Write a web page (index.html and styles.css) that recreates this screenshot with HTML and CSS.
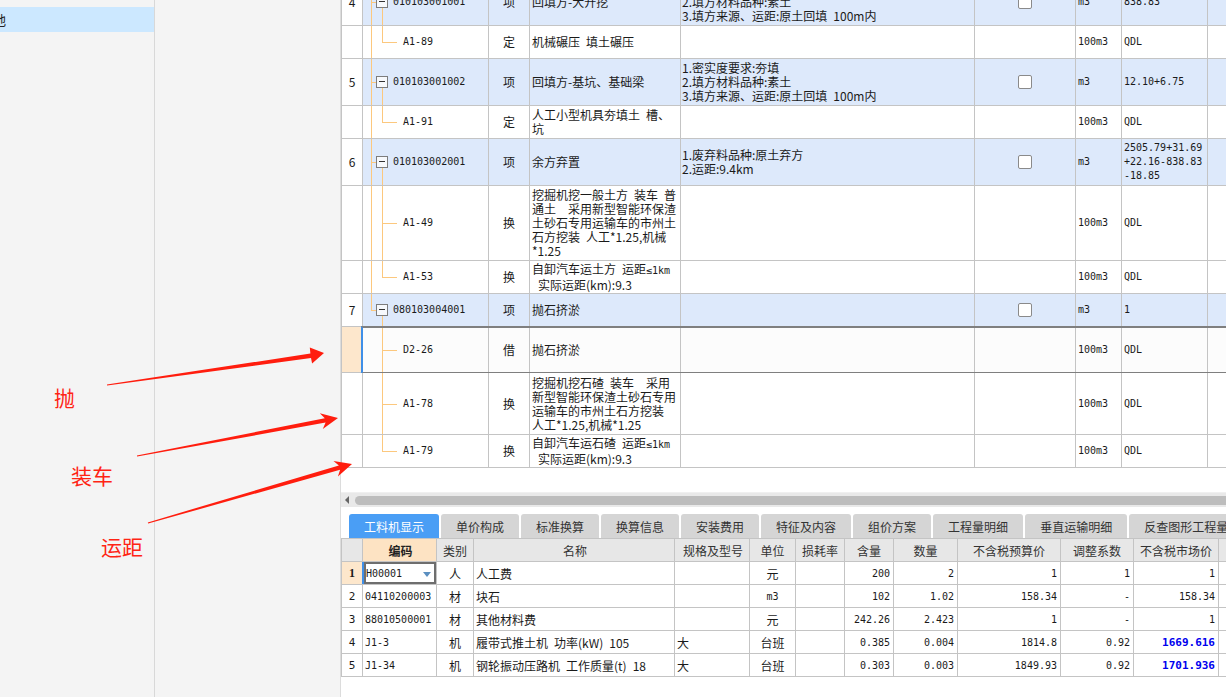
FILE: index.html
```html
<!DOCTYPE html>
<html lang="zh-CN">
<head>
<meta charset="utf-8">
<title>分部分项</title>
<link rel="stylesheet" href="styles.css">
</head>
<body>
<div class="app">
  <aside class="nav">
    <div class="nav-item"><span>地</span></div>
  </aside>
  <aside class="nav2"></aside>
  <main class="main">
    <div class="grid-wrap">
      <div class="grid">
        <div class="row item h47">
          <div class="c num">4</div>
          <div class="c tree"><span class="v1 full"></span><span class="h1"></span><span class="box"></span><span class="v2 bottom"></span><span class="code m">010103001001</span></div>
          <div class="c typ">项</div>
          <div class="c name">回填方-大开挖</div>
          <div class="c feat">1.密实度要求:夯填<br>2.填方材料品种:素土<br>3.填方来源、运距:原土回填&ensp;100m内</div>
          <div class="c chk"><span class="cb"></span></div>
          <div class="c unit m">m3</div>
          <div class="c qty m">838.83</div>
          <div class="c last"></div>
        </div>
        <div class="row h33">
          <div class="c num"></div>
          <div class="c tree"><span class="v1 full"></span><span class="v2 top"></span><span class="h2"></span><span class="code child m">A1-89</span></div>
          <div class="c typ">定</div>
          <div class="c name">机械碾压&ensp;填土碾压</div>
          <div class="c feat"></div>
          <div class="c chk"></div>
          <div class="c unit m">100m3</div>
          <div class="c qty m">QDL</div>
          <div class="c last"></div>
        </div>
        <div class="row item h47">
          <div class="c num">5</div>
          <div class="c tree"><span class="v1 full"></span><span class="h1"></span><span class="box"></span><span class="v2 bottom"></span><span class="code m">010103001002</span></div>
          <div class="c typ">项</div>
          <div class="c name">回填方-基坑、基础梁</div>
          <div class="c feat">1.密实度要求:夯填<br>2.填方材料品种:素土<br>3.填方来源、运距:原土回填&ensp;100m内</div>
          <div class="c chk"><span class="cb"></span></div>
          <div class="c unit m">m3</div>
          <div class="c qty m">12.10+6.75</div>
          <div class="c last"></div>
        </div>
        <div class="row h33">
          <div class="c num"></div>
          <div class="c tree"><span class="v1 full"></span><span class="v2 top"></span><span class="h2"></span><span class="code child m">A1-91</span></div>
          <div class="c typ">定</div>
          <div class="c name">人工小型机具夯填土&ensp;槽、<br>坑</div>
          <div class="c feat"></div>
          <div class="c chk"></div>
          <div class="c unit m">100m3</div>
          <div class="c qty m">QDL</div>
          <div class="c last"></div>
        </div>
        <div class="row item h47">
          <div class="c num">6</div>
          <div class="c tree"><span class="v1 full"></span><span class="h1"></span><span class="box"></span><span class="v2 bottom"></span><span class="code m">010103002001</span></div>
          <div class="c typ">项</div>
          <div class="c name">余方弃置</div>
          <div class="c feat">1.废弃料品种:原土弃方<br>2.运距:9.4km</div>
          <div class="c chk"><span class="cb"></span></div>
          <div class="c unit m">m3</div>
          <div class="c qty m">2505.79+31.69<br>+22.16-838.83<br>-18.85</div>
          <div class="c last"></div>
        </div>
        <div class="row h75">
          <div class="c num"></div>
          <div class="c tree"><span class="v1 full"></span><span class="v2 full"></span><span class="h2"></span><span class="code child m">A1-49</span></div>
          <div class="c typ">换</div>
          <div class="c name">挖掘机挖一般土方&ensp;装车&ensp;普<br>通土&ensp;&ensp;采用新型智能环保渣<br>土砂石专用运输车的市州土<br>石方挖装&ensp;人工*1.25,机械<br>*1.25</div>
          <div class="c feat"></div>
          <div class="c chk"></div>
          <div class="c unit m">100m3</div>
          <div class="c qty m">QDL</div>
          <div class="c last"></div>
        </div>
        <div class="row h33">
          <div class="c num"></div>
          <div class="c tree"><span class="v1 full"></span><span class="v2 top"></span><span class="h2"></span><span class="code child m">A1-53</span></div>
          <div class="c typ">换</div>
          <div class="c name"><div class="txt">自卸汽车运土方&ensp;运距<span class="mi">≤1km</span><br>&ensp;实际运距(km):9.3</div></div>
          <div class="c feat"></div>
          <div class="c chk"></div>
          <div class="c unit m">100m3</div>
          <div class="c qty m">QDL</div>
          <div class="c last"></div>
        </div>
        <div class="row item h33">
          <div class="c num">7</div>
          <div class="c tree"><span class="v1 top"></span><span class="h1"></span><span class="box"></span><span class="v2 bottom"></span><span class="code m">080103004001</span></div>
          <div class="c typ">项</div>
          <div class="c name">抛石挤淤</div>
          <div class="c feat"></div>
          <div class="c chk"><span class="cb"></span></div>
          <div class="c unit m">m3</div>
          <div class="c qty m">1</div>
          <div class="c last"></div>
        </div>
        <div class="row sel h46">
          <div class="c num"></div>
          <div class="c tree"><span class="v2 full"></span><span class="h2"></span><span class="code child m">D2-26</span></div>
          <div class="c typ">借</div>
          <div class="c name">抛石挤淤</div>
          <div class="c feat"></div>
          <div class="c chk"></div>
          <div class="c unit m">100m3</div>
          <div class="c qty m">QDL</div>
          <div class="c last"></div>
        </div>
        <div class="row h62">
          <div class="c num"></div>
          <div class="c tree"><span class="v2 full"></span><span class="h2"></span><span class="code child m">A1-78</span></div>
          <div class="c typ">换</div>
          <div class="c name">挖掘机挖石碴&ensp;装车&ensp;&ensp;采用<br>新型智能环保渣土砂石专用<br>运输车的市州土石方挖装<br>人工*1.25,机械*1.25</div>
          <div class="c feat"></div>
          <div class="c chk"></div>
          <div class="c unit m">100m3</div>
          <div class="c qty m">QDL</div>
          <div class="c last"></div>
        </div>
        <div class="row h33">
          <div class="c num"></div>
          <div class="c tree"><span class="v2 top"></span><span class="h2"></span><span class="code child m">A1-79</span></div>
          <div class="c typ">换</div>
          <div class="c name"><div class="txt">自卸汽车运石碴&ensp;运距<span class="mi">≤1km</span><br>&ensp;实际运距(km):9.3</div></div>
          <div class="c feat"></div>
          <div class="c chk"></div>
          <div class="c unit m">100m3</div>
          <div class="c qty m">QDL</div>
          <div class="c last"></div>
        </div>
      </div>
    </div>

    <div class="hscroll">
      <span class="arrow-l"></span>
      <div class="thumb"></div>
    </div>

    <div class="tabs">
      <div class="tab active">工料机显示</div>
      <div class="tab">单价构成</div>
      <div class="tab">标准换算</div>
      <div class="tab">换算信息</div>
      <div class="tab">安装费用</div>
      <div class="tab">特征及内容</div>
      <div class="tab">组价方案</div>
      <div class="tab">工程量明细</div>
      <div class="tab">垂直运输明细</div>
      <div class="tab">反查图形工程量</div>
    </div>

    <div class="sub">
      <div class="lrow head">
        <div class="lc lnum"></div>
        <div class="lc lcode hl">编码</div>
        <div class="lc lcat">类别</div>
        <div class="lc lname">名称</div>
        <div class="lc lspec">规格及型号</div>
        <div class="lc lunit">单位</div>
        <div class="lc lloss">损耗率</div>
        <div class="lc lcont">含量</div>
        <div class="lc lqty">数量</div>
        <div class="lc lbud">不含税预算价</div>
        <div class="lc ladj">调整系数</div>
        <div class="lc lmkt">不含税市场价</div>
        <div class="lc lrest"></div>
      </div>
      <div class="lrow">
        <div class="lc lnum cur">1</div>
        <div class="lc lcode edit"><span class="m">H00001</span><span class="dd"></span></div>
        <div class="lc lcat">人</div>
        <div class="lc lname">人工费</div>
        <div class="lc lspec"></div>
        <div class="lc lunit">元</div>
        <div class="lc lloss"></div>
        <div class="lc lcont m">200</div>
        <div class="lc lqty m">2</div>
        <div class="lc lbud m">1</div>
        <div class="lc ladj m">1</div>
        <div class="lc lmkt m">1</div>
        <div class="lc lrest"></div>
      </div>
      <div class="lrow">
        <div class="lc lnum">2</div>
        <div class="lc lcode m">04110200003</div>
        <div class="lc lcat">材</div>
        <div class="lc lname">块石</div>
        <div class="lc lspec"></div>
        <div class="lc lunit m">m3</div>
        <div class="lc lloss"></div>
        <div class="lc lcont m">102</div>
        <div class="lc lqty m">1.02</div>
        <div class="lc lbud m">158.34</div>
        <div class="lc ladj m">-</div>
        <div class="lc lmkt m">158.34</div>
        <div class="lc lrest"></div>
      </div>
      <div class="lrow">
        <div class="lc lnum">3</div>
        <div class="lc lcode m">88010500001</div>
        <div class="lc lcat">材</div>
        <div class="lc lname">其他材料费</div>
        <div class="lc lspec"></div>
        <div class="lc lunit">元</div>
        <div class="lc lloss"></div>
        <div class="lc lcont m">242.26</div>
        <div class="lc lqty m">2.423</div>
        <div class="lc lbud m">1</div>
        <div class="lc ladj m">-</div>
        <div class="lc lmkt m">1</div>
        <div class="lc lrest"></div>
      </div>
      <div class="lrow">
        <div class="lc lnum">4</div>
        <div class="lc lcode m">J1-3</div>
        <div class="lc lcat">机</div>
        <div class="lc lname">履带式推土机&ensp;功率(kW)&ensp;105</div>
        <div class="lc lspec">大</div>
        <div class="lc lunit">台班</div>
        <div class="lc lloss"></div>
        <div class="lc lcont m">0.385</div>
        <div class="lc lqty m">0.004</div>
        <div class="lc lbud m">1814.8</div>
        <div class="lc ladj m">0.92</div>
        <div class="lc lmkt m blue">1669.616</div>
        <div class="lc lrest"></div>
      </div>
      <div class="lrow">
        <div class="lc lnum">5</div>
        <div class="lc lcode m">J1-34</div>
        <div class="lc lcat">机</div>
        <div class="lc lname">钢轮振动压路机&ensp;工作质量(t)&ensp;18</div>
        <div class="lc lspec">大</div>
        <div class="lc lunit">台班</div>
        <div class="lc lloss"></div>
        <div class="lc lcont m">0.303</div>
        <div class="lc lqty m">0.003</div>
        <div class="lc lbud m">1849.93</div>
        <div class="lc ladj m">0.92</div>
        <div class="lc lmkt m blue">1701.936</div>
        <div class="lc lrest"></div>
      </div>
    </div>
  </main>
</div>

<div class="anno">
  <svg class="arrows" width="1226" height="697" viewBox="0 0 1226 697">
    <polygon points="106.9,384.4 310.4,353.6 309.8,347.6 324,353 312.1,363.4 311.0,358.0 107.1,385.6"/>
    <polygon points="136.9,455.4 324.8,418.3 319.8,413.3 338,418 322.8,429.0 325.6,422.6 137.1,456.6"/>
    <polygon points="147.8,522.4 338.9,465.5 333.5,461.0 352,464 337.9,476.4 340.1,469.7 148.2,523.6"/>
  </svg>
  <div class="label l1">抛</div>
  <div class="label l2">装车</div>
  <div class="label l3">运距</div>
</div>
</body>
</html>
```
FILE: styles.css
```css
* { box-sizing: border-box; }
html, body { margin: 0; padding: 0; }
body {
  width: 1226px;
  height: 697px;
  overflow: hidden;
  position: relative;
  background: #fff;
  color: #1a1a1a;
  font-family: "Noto Sans CJK SC", "Liberation Sans", sans-serif;
  font-size: 12px;
}
.app { display: flex; height: 697px; }

/* left panels */
.nav {
  width: 155px;
  flex: none;
  background: #f4f4f4;
  border-right: 1px solid #d8d8d8;
  padding-top: 7px;
  overflow: hidden;
}
.nav-item {
  height: 25px;
  background: #cce8ff;
  display: flex;
  align-items: center;
  font-size: 13px;
  color: #222;
}
.nav-item span { margin-left: -7px; }
.nav2 {
  width: 186px;
  flex: none;
  background: #f4f4f4;
  border-right: 1px solid #dcdcdc;
}

/* main */
.main {
  flex: 1;
  min-width: 0;
  display: flex;
  flex-direction: column;
  background: #fff;
  overflow: hidden;
}
.grid-wrap { height: 492px; flex: none; overflow: hidden; }
.grid { margin-top: -21px; }
.row {
  display: flex;
  position: relative;
  border-bottom: 1px solid #c4c4c4;
  background: #fff;
}
.row.item { background: #dde9fb; }
.row.sel { background: #fcfcfc; }
.h33 { height: 33px; }
.h46 { height: 46px; }
.h47 { height: 47px; }
.h62 { height: 62px; }
.h75 { height: 75px; }

.c {
  flex: none;
  display: flex;
  align-items: center;
  border-right: 1px solid #c4c4c4;
  line-height: 14px;
  white-space: nowrap;
  overflow: hidden;
}
.m, .mi {
  font-family: "DejaVu Sans Mono", "Liberation Mono", monospace;
  font-size: 10px;
}
.txt { line-height: 14px; }
.num { width: 22px; border-left: 1px solid #c4c4c4; justify-content: center; background: #fff; }
.tree { width: 126px; position: relative; }
.typ { width: 41px; justify-content: center; }
.name { width: 151px; padding-left: 2px; }
.feat { width: 294px; padding-left: 1px; }
.chk { width: 101px; justify-content: center; }
.unit { width: 46px; padding-left: 2px; }
.qty { width: 86px; padding-left: 2px; }
.last { flex: 1; border-right: none; }

.row.sel .num { background: #fde7cc; }
.row.sel::after {
  content: "";
  position: absolute;
  left: 20px;
  right: 0;
  top: -1px;
  bottom: -2px;
  border-top: 2px solid #7f7f7f;
  border-bottom: 2px solid #7f7f7f;
  border-left: 2px solid #3f8fe8;
  pointer-events: none;
}

.cb {
  width: 14px;
  height: 14px;
  border: 1px solid #8a8a8a;
  border-radius: 2px;
  background: #fff;
}

/* tree lines */
.tree span { position: absolute; }
.v1, .v2 { width: 1px; background: #fcc87e; }
.v1 { left: 8px; }
.v2 { left: 19px; }
.full { top: 0; bottom: 0; }
.v1.top, .v2.top { top: 0; height: 50%; }
.v2.bottom { top: calc(50% + 6px); bottom: 0; }
.h1, .h2 { height: 1px; background: #fcc87e; top: 50%; }
.h1 { left: 8px; width: 5px; }
.h2 { left: 19px; width: 15px; }
.box {
  left: 13px;
  top: calc(50% - 6px);
  width: 12px;
  height: 12px;
  border: 1px solid #7d7d7d;
  background: #f7f9fc;
}
.box::after {
  content: "";
  position: absolute;
  left: 2px;
  right: 2px;
  top: 4px;
  height: 1px;
  background: #333;
}
.tree .code { position: static; padding-left: 30px; }
.tree .code.child { padding-left: 40px; }

/* horizontal scrollbar */
.hscroll {
  height: 15px;
  flex: none;
  position: relative;
  background: #e9e9e9;
  border-top: 1px solid #f0f0f0;
  display: flex;
  align-items: center;
  padding-left: 4px;
}
.arrow-l {
  width: 0;
  height: 0;
  border-top: 4px solid transparent;
  border-bottom: 4px solid transparent;
  border-right: 4px solid #666;
}
.thumb {
  flex: 1;
  height: 9px;
  margin-left: 6px;
  background: #bdbdbd;
  border-radius: 5px 0 0 5px;
}

/* tabs */
.tabs {
  flex: none;
  display: flex;
  gap: 2px;
  padding: 7px 0 0 8px;
  height: 32px;
  background: #fff;
  overflow: hidden;
}
.tab {
  flex: none;
  height: 24px;
  padding: 0 15px;
  background: #d5d5d5;
  color: #333;
  border-radius: 3px 3px 0 0;
  display: flex;
  align-items: center;
  white-space: nowrap;
  font-size: 12px;
}
.tab.active { background: #4a9ef5; color: #fff; }

/* lower table */
.sub { flex: 1; background: #fff; }
.lrow {
  display: flex;
  height: 23px;
  border-bottom: 1px solid #c4c4c4;
}
.lrow.head { height: 24px; background: #e7e7e7; border-top: 1px solid #c4c4c4; margin-top: -1px; }
.lc {
  flex: none;
  display: flex;
  align-items: center;
  border-right: 1px solid #c4c4c4;
  white-space: nowrap;
  overflow: hidden;
  font-size: 12px;
  position: relative;
}
.lc.m { font-size: 10px; justify-content: flex-end; padding-right: 3px; }
.head .lc { justify-content: center; color: #333; font-size: 12px; }
.lnum { width: 22px; border-left: 1px solid #c4c4c4; justify-content: center; font-family: "DejaVu Sans Mono", monospace; font-size: 11px; }
.lcode { width: 74px; padding-left: 2px; }
.lc.lcode.m { justify-content: flex-start; padding-right: 0; }
.lcat { width: 37px; justify-content: center; }
.lname { width: 201px; padding-left: 2px; }
.lspec { width: 75px; padding-left: 2px; }
.lunit { width: 46px; justify-content: center; }
.lc.lunit.m { justify-content: center; padding-right: 0; }
.lloss { width: 49px; }
.lcont { width: 49px; }
.lqty { width: 64px; }
.lbud { width: 103px; }
.ladj { width: 73px; }
.lmkt { width: 85px; }
.lrest { flex: 1; border-right: none; }
.head .hl { background: #fde3c3; font-weight: bold; color: #222; }
.lnum.cur { background: #fde7cc; font-weight: bold; font-family: "Liberation Serif", serif; font-size: 12px; }
.lc.blue { color: #0000ee; font-weight: bold; font-size: 11px; }
.edit { box-shadow: inset 0 0 0 2px #6e6e6e; border-left: 2px solid #3f8fe8; margin-left: -1px; width: 75px; }
.edit .m { font-size: 10px; }
.dd {
  position: absolute;
  left: 59px;
  top: 10px;
  width: 0;
  height: 0;
  border-left: 4px solid transparent;
  border-right: 4px solid transparent;
  border-top: 5px solid #5b8fc0;
}

/* annotations */
.anno { position: absolute; left: 0; top: 0; width: 1226px; height: 697px; pointer-events: none; }
.arrows { position: absolute; left: 0; top: 0; }
.arrows polygon { fill: #ff1d0e; }
.label {
  position: absolute;
  color: #ff2414;
  font-size: 21px;
  line-height: 21px;
  font-family: "Noto Sans CJK SC", sans-serif;
}
.l1 { left: 54px; top: 387px; }
.l2 { left: 71px; top: 465px; }
.l3 { left: 101px; top: 536px; }
```
